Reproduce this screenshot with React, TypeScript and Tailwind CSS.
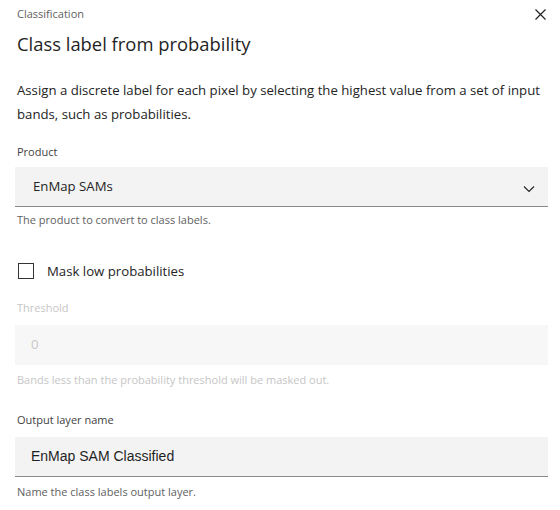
import React from "react";

const font = { fontFamily: '"Open Sans", "Noto Sans", sans-serif' };

export default function App() {
  return (
    <div className="w-[560px] h-[510px] bg-white relative text-[#1f1f1f]" style={font}>
      <button className="absolute right-[13px] top-[7px] w-[14px] h-[14px] flex items-center justify-center">
        <svg width="11" height="11" viewBox="0 0 11 11">
          <path d="M0.5 0.5 L10.5 10.5 M10.5 0.5 L0.5 10.5" stroke="#222" strokeWidth="1.2" />
        </svg>
      </button>
      <div className="pl-[17px] pr-[12px] flex flex-col">
        <div className="mt-[4px] h-[20px] leading-[20px] text-[11px] text-[#616161]">Classification</div>
        <div className="mt-[6px] h-[28px] leading-[28px] text-[18.4px] text-[#1f1f1f]">Class label from probability</div>
        <div className="mt-[20px] leading-[24px] text-[13.2px] text-[#242424]">
          Assign a discrete label for each pixel by selecting the highest value from a set of input bands, such as probabilities.
        </div>
        <div className="mt-[18px] h-[16px] leading-[16px] text-[11px] text-[#424242]">Product</div>
        <div className="mt-[7px] -ml-[2px] h-[40px] bg-[#f3f3f3] border-b border-[#8a8a8a] flex items-center pl-[18px] pr-[13px]">
          <span className="grow text-[13.2px] text-[#242424]">EnMap SAMs</span>
          <svg width="12" height="8" viewBox="0 0 12 8" className="block mt-[4px] shrink-0">
            <path d="M1 1.5 L6 6.5 L11 1.5" fill="none" stroke="#222" strokeWidth="1.1" />
          </svg>
        </div>
        <div className="mt-[5px] h-[16px] leading-[16px] text-[11px] text-[#616161]">The product to convert to class labels.</div>
        <div className="mt-[35px] flex items-center">
          <div className="ml-[1px] w-[16px] h-[16px] border border-[#333] bg-white" />
          <span className="ml-[13px] text-[13.2px] text-[#242424] leading-[16px]">Mask low probabilities</span>
        </div>
        <div className="mt-[21px] h-[16px] leading-[16px] text-[11px] text-[#c6c6c6]">Threshold</div>
        <div className="mt-[9px] -ml-[2px] h-[40px] bg-[#f7f7f7] flex items-center pl-[16px]">
          <span className="text-[13.2px] text-[#c8c8c8]">0</span>
        </div>
        <div className="mt-[7px] h-[16px] leading-[16px] text-[11px] text-[#c6c6c6]">Bands less than the probability threshold will be masked out.</div>
        <div className="mt-[24px] h-[16px] leading-[16px] text-[11px] text-[#424242]">Output layer name</div>
        <div className="mt-[9px] -ml-[2px] h-[40px] bg-[#f3f3f3] border-b border-[#8a8a8a] flex items-center pl-[16px]">
          <span className="text-[14px] text-[#1f1f1f]" style={{ fontFamily: '"Liberation Sans", Arial, sans-serif' }}>EnMap SAM Classified</span>
        </div>
        <div className="mt-[7px] h-[16px] leading-[16px] text-[11px] text-[#616161]">Name the class labels output layer.</div>
      </div>
    </div>
  );
}
